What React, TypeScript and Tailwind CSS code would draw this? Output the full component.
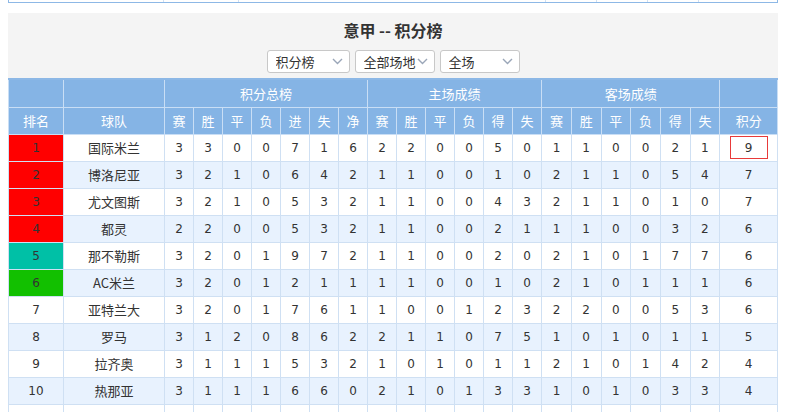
const rows: [number, string, number[], number[], number[], number][] = [
  [1, '国际米兰', [3, 3, 0, 0, 7, 1, 6], [2, 2, 0, 0, 5, 0], [1, 1, 0, 0, 2, 1], 9],
  [2, '博洛尼亚', [3, 2, 1, 0, 6, 4, 2], [1, 1, 0, 0, 1, 0], [2, 1, 1, 0, 5, 4], 7],
  [3, '尤文图斯', [3, 2, 1, 0, 5, 3, 2], [1, 1, 0, 0, 4, 3], [2, 1, 1, 0, 1, 0], 7],
  [4, '都灵', [2, 2, 0, 0, 5, 3, 2], [1, 1, 0, 0, 2, 1], [1, 1, 0, 0, 3, 2], 6],
  [5, '那不勒斯', [3, 2, 0, 1, 9, 7, 2], [1, 1, 0, 0, 2, 0], [2, 1, 0, 1, 7, 7], 6],
  [6, 'AC米兰', [3, 2, 0, 1, 2, 1, 1], [1, 1, 0, 0, 1, 0], [2, 1, 0, 1, 1, 1], 6],
  [7, '亚特兰大', [3, 2, 0, 1, 7, 6, 1], [1, 0, 0, 1, 2, 3], [2, 2, 0, 0, 5, 3], 6],
  [8, '罗马', [3, 1, 2, 0, 8, 6, 2], [2, 1, 1, 0, 7, 5], [1, 0, 1, 0, 1, 1], 5],
  [9, '拉齐奥', [3, 1, 1, 1, 5, 3, 2], [1, 0, 1, 0, 1, 1], [2, 1, 0, 1, 4, 2], 4],
  [10, '热那亚', [3, 1, 1, 1, 6, 6, 0], [2, 1, 0, 1, 3, 3], [1, 0, 1, 0, 3, 3], 4],
];

const rankBg: Record<number, string> = {
  1: 'bg-[#ff0000]',
  2: 'bg-[#ff0000]',
  3: 'bg-[#ff0000]',
  4: 'bg-[#ff0000]',
  5: 'bg-[#00c0a6]',
  6: 'bg-[#12c000]',
};

const totalCols = ['赛', '胜', '平', '负', '进', '失', '净'];
const sideCols = ['赛', '胜', '平', '负', '得', '失'];

function Select({ label, width }: { label: string; width: string }) {
  return (
    <div
      className={`${width} h-[23px] bg-white border border-[#c8c8c8] rounded-[3px] flex items-center justify-between pl-[8px] pr-[6px] text-[13px] text-[#333]`}
    >
      <span className="whitespace-nowrap overflow-hidden">{label}</span>
      <svg width="11" height="7" viewBox="0 0 11 7" className="shrink-0">
        <path d="M1 1l4.5 4.5L10 1" fill="none" stroke="#9aa6b8" strokeWidth="1.4" />
      </svg>
    </div>
  );
}

export default function App() {
  const th = 'border border-[#c9def5] font-normal text-white text-[13px]';
  const td = 'border border-[#cfe0f3] text-center h-[27px] p-0';
  return (
    <div
      className="w-[785px] h-[412px] overflow-hidden bg-white pl-[8px] text-[#333]"
      style={{ fontFamily: '"Microsoft YaHei", "Noto Sans CJK SC", sans-serif' }}
    >
      {/* tail of the previous table */}
      <div className="w-[770px] h-[3px] border-b border-x border-[#8db8e6] flex">
        <div className="w-[155px] border-r border-[#cfe0f3]" />
        <div className="w-[75px] border-r border-[#cfe0f3]" />
        <div className="w-[307px] border-r border-[#cfe0f3]" />
        <div className="w-[51px] border-r border-[#cfe0f3]" />
        <div className="w-[51px] border-r border-[#cfe0f3]" />
        <div className="w-[51px] border-r border-[#cfe0f3]" />
      </div>

      <div className="mt-[10px] w-[770px] bg-[#f4f4f4] h-[65px] flex flex-col items-center">
        <div className="mt-[6px] text-[16px] font-bold leading-[22px] text-[#333]">意甲 -- 积分榜</div>
        <div className="mt-[9px] flex gap-[5px]">
          <Select label="积分榜" width="w-[83px]" />
          <Select label="全部场地" width="w-[80px]" />
          <Select label="全场" width="w-[80px]" />
        </div>
      </div>

      <table
        className="table-fixed border-collapse w-[770px] border-t-2 border-x border-[#8db8e6]"
        style={{ fontFamily: 'Verdana, "DejaVu Sans", "Noto Sans CJK SC", sans-serif' }}
      >
        <colgroup>
          <col className="w-[55px]" />
          <col className="w-[101px]" />
          {totalCols.map((_, i) => (
            <col key={'t' + i} className="w-[29px]" />
          ))}
          {sideCols.map((_, i) => (
            <col key={'h' + i} className="w-[29px]" />
          ))}
          {sideCols.map((_, i) => (
            <col key={'a' + i} className="w-[29.7px]" />
          ))}
          <col />
        </colgroup>
        <thead className="bg-[#85b4e5]" style={{ fontFamily: '"Microsoft YaHei", "Noto Sans CJK SC", sans-serif' }}>
          <tr className="h-[28px]">
            <th className={th} />
            <th className={th} />
            <th className={th} colSpan={7}>积分总榜</th>
            <th className={th} colSpan={6}>主场成绩</th>
            <th className={th} colSpan={6}>客场成绩</th>
            <th className={th} />
          </tr>
          <tr className="h-[27px]">
            <th className={th}>排名</th>
            <th className={th}>球队</th>
            {totalCols.map((c, i) => (
              <th key={'t' + i} className={th}>{c}</th>
            ))}
            {sideCols.map((c, i) => (
              <th key={'h' + i} className={th}>{c}</th>
            ))}
            {sideCols.map((c, i) => (
              <th key={'a' + i} className={th}>{c}</th>
            ))}
            <th className={th}>积分</th>
          </tr>
        </thead>
        <tbody className="text-[12px] text-[#333]">
          {rows.map(([rank, team, total, home, away, pts]) => (
            <tr key={rank} className={rank % 2 === 0 ? 'bg-[#e8f2fe]' : 'bg-white'}>
              <td className={`${td} ${rankBg[rank] ?? ''}`}>{rank}</td>
              <td className={`${td} text-[13px]`} style={{ fontFamily: '"Microsoft YaHei", "Noto Sans CJK SC", sans-serif' }}>
                {team}
              </td>
              {[...total, ...home, ...away].map((v, i) => (
                <td key={i} className={td}>{v}</td>
              ))}
              <td className={td}>
                {rank === 1 ? (
                  <div className="mx-auto w-[38px] h-[23px] border border-[#e83a3a] flex items-center justify-center">{pts}</div>
                ) : (
                  pts
                )}
              </td>
            </tr>
          ))}
          <tr className="bg-white">
            {Array.from({ length: 22 }).map((_, i) => (
              <td key={i} className={td} />
            ))}
          </tr>
        </tbody>
      </table>
    </div>
  );
}
